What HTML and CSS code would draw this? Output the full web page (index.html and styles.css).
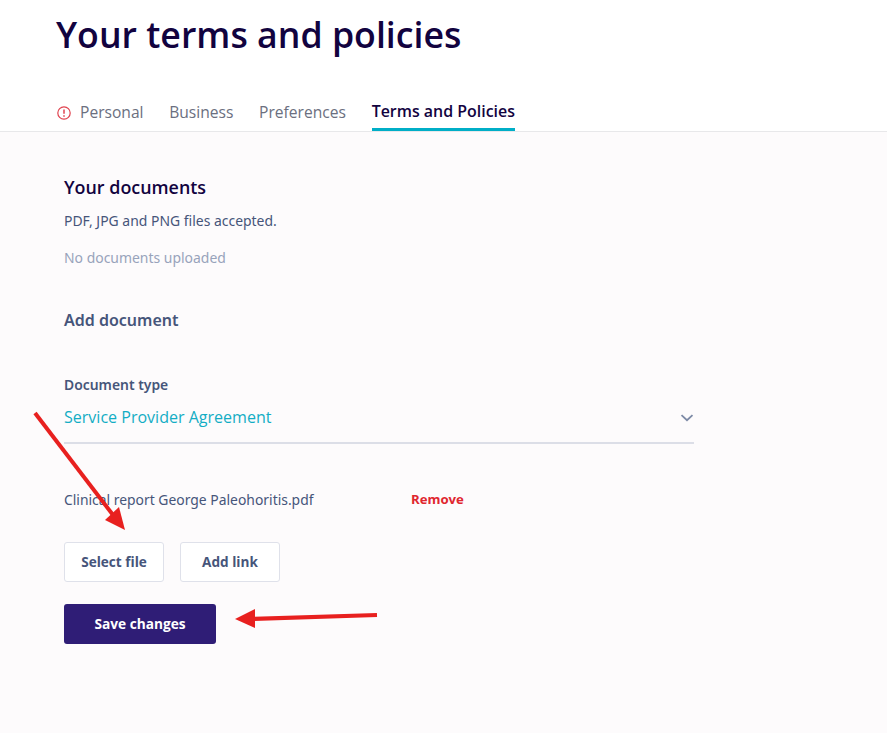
FILE: index.html
```html
<!DOCTYPE html>
<html lang="en">
<head>
<meta charset="utf-8">
<title>Your terms and policies</title>
<link rel="stylesheet" href="styles.css">
</head>
<body>
<header class="top">
  <h1 class="title">Your terms and policies</h1>
  <nav class="tabs">
    <a class="tab tab-alert">
      <svg class="alert-icon" width="14" height="14" viewBox="0 0 14 14"><circle cx="7" cy="7" r="6.2" fill="none" stroke="#e0434f" stroke-width="1.2"/><path d="M7 3.4v4.4" stroke="#e0434f" stroke-width="1.5"/><path d="M7 9.2v1.5" stroke="#e0434f" stroke-width="1.5"/></svg>
      Personal</a>
    <a class="tab">Business</a>
    <a class="tab">Preferences</a>
    <a class="tab tab-active">Terms and Policies</a>
  </nav>
</header>
<main class="content">
  <h2 class="docs-title">Your documents</h2>
  <p class="hint">PDF, JPG and PNG files accepted.</p>
  <p class="empty">No documents uploaded</p>
  <h3 class="add-title">Add document</h3>
  <label class="field-label">Document type</label>
  <div class="select">
    <span>Service Provider Agreement</span>
    <svg class="chevron" width="14" height="8" viewBox="0 0 14 8"><path d="M1.5 1.2 7 6.2l5.5-5" fill="none" stroke="#7d8aa6" stroke-width="1.8"/></svg>
  </div>
  <div class="file-row">
    <span class="file-name">Clinical report George Paleohoritis.pdf</span>
    <a class="remove">Remove</a>
  </div>
  <div class="btn-row">
    <button class="btn">Select file</button>
    <button class="btn">Add link</button>
  </div>
  <button class="btn-primary">Save changes</button>
</main>
<svg class="arrows" width="887" height="733" viewBox="0 0 887 733">
  <path d="M35 413 113 515" stroke="#e8201f" stroke-width="4" fill="none"/>
  <path d="M125 530 105 520 119 507Z" fill="#e8201f"/>
  <path d="M377 615 250 619" stroke="#e8201f" stroke-width="4" fill="none"/>
  <path d="M235 619 255 609 255 628Z" fill="#e8201f"/>
</svg>
</body>
</html>
```
FILE: styles.css
```css
* { box-sizing: border-box; }
html, body { margin: 0; padding: 0; }
body {
  width: 887px;
  height: 733px;
  overflow: hidden;
  position: relative;
  background: #fdfbfc;
  font-family: "Noto Sans", "Open Sans", sans-serif;
  color: #46557a;
}
.top {
  height: 132px;
  background: #fff;
  border-bottom: 1px solid #e8e8ea;
  padding: 11px 0 0 57px;
}
.title {
  margin: 0 0 0 -1px;
  height: 85px;
  font-family: "Open Sans", sans-serif;
  font-size: 35.7px;
  line-height: 46px;
  font-weight: 600;
  color: #12033f;
}
.tabs {
  display: flex;
  gap: 25.7px;
  height: 35px;
}
.tab {
  display: flex;
  align-items: flex-start;
  gap: 9px;
  font-family: "Open Sans", sans-serif;
  font-size: 15.6px;
  line-height: 32px;
  color: #6b6f80;
}
.alert-icon { margin-top: 10px; }
.tab-active {
  font-weight: 600;
  font-size: 15.95px;
  color: #12033f;
  border-bottom: 3px solid #00aec7;
  line-height: 30px;
}
.content { padding: 43px 0 0 64px; }
.docs-title {
  margin: 0;
  font-family: "Open Sans", sans-serif;
  font-size: 17.9px;
  line-height: 24px;
  font-weight: 600;
  color: #12033f;
}
.hint { margin: 12px 0 0; font-size: 13.95px; line-height: 20px; }
.empty { margin: 17px 0 0; font-size: 13.95px; line-height: 20px; color: #98a3bb; }
.add-title { margin: 40px 0 0; font-size: 16px; line-height: 24px; font-weight: 600; }
.field-label { display: block; margin-top: 43px; font-size: 13.9px; line-height: 20px; font-weight: 600; }
.select {
  width: 630px;
  height: 49px;
  display: flex;
  align-items: center;
  justify-content: space-between;
  padding-bottom: 3px;
  border-bottom: 2px solid #dcdee7;
  color: #13adc4;
  font-family: "Open Sans", sans-serif;
  font-weight: 500;
  font-size: 16.05px;
}
.chevron { margin-top: 2px; }
.file-row { display: flex; margin-top: 46px; font-size: 13.9px; line-height: 20px; height: 20px; }
.file-name { width: 347px; }
.remove { font-family: "Open Sans", sans-serif; font-weight: 700; font-size: 13.2px; line-height: 18px; color: #e0262f; }
.btn-row { display: flex; gap: 16px; margin-top: 32px; }
.btn {
  width: 100px;
  height: 40px;
  padding: 0 0 2px;
  background: #fff;
  border: 1px solid #dfe1ea;
  border-radius: 3px;
  font-family: "Open Sans", sans-serif;
  font-weight: 700;
  font-size: 13.6px;
  color: #46557a;
}
.btn-primary {
  display: block;
  margin-top: 22px;
  width: 152px;
  height: 40px;
  padding: 0 0 2px;
  background: #2f1d76;
  border: 0;
  border-radius: 3px;
  font-family: "Open Sans", sans-serif;
  font-weight: 700;
  font-size: 13.7px;
  color: #fff;
}
.arrows { position: absolute; left: 0; top: 0; pointer-events: none; }
```
